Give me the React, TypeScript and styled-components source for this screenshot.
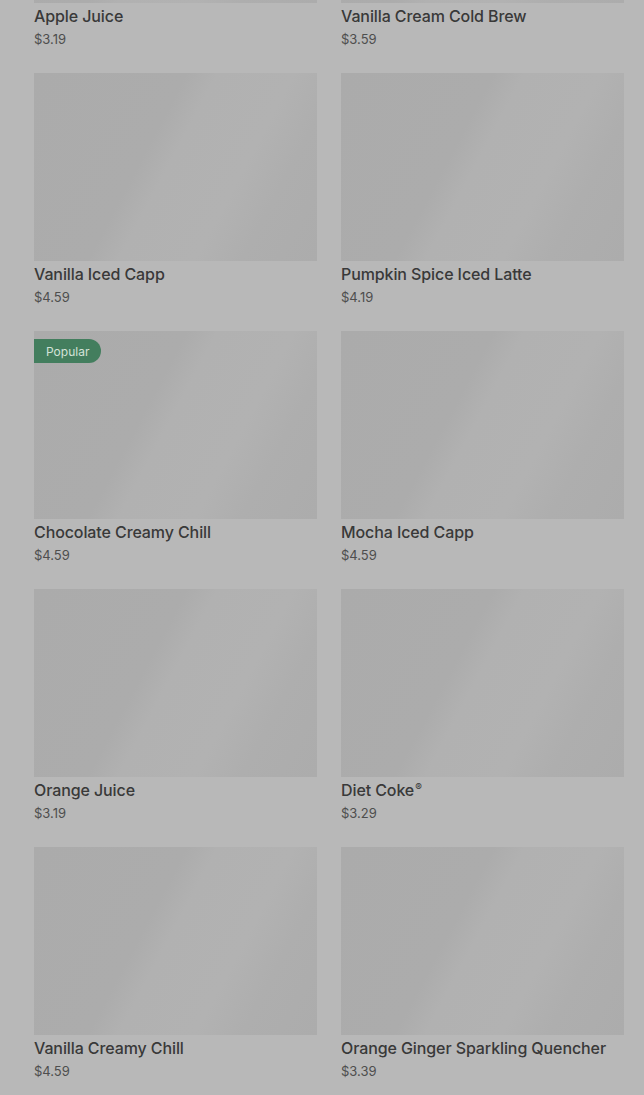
import React from "react";
import styled, { createGlobalStyle } from "styled-components";

const Global = createGlobalStyle`
  html, body { margin: 0; padding: 0; background: #b8b8b8; overflow: hidden; }
  body { font-family: Inter, Roboto, "Liberation Sans", Arial, sans-serif; }
`;

const Grid = styled.div`
  display: grid;
  grid-template-columns: 283px 283px;
  column-gap: 24px;
  row-gap: 24px;
  padding: 0 20px 0 34px;
  margin-top: -185px;
`;

const Card = styled.div`
  display: flex;
  flex-direction: column;
`;

const Thumb = styled.div`
  position: relative;
  height: 188px;
  background: linear-gradient(
    118deg,
    #ababab 0%,
    #acacac 40%,
    #b1b1b1 48%,
    #b2b2b2 68%,
    #aeaeae 80%,
    #acacac 100%
  );
`;

const Badge = styled.span`
  position: absolute;
  top: 8px;
  left: 0;
  height: 24px;
  padding: 0 12px;
  display: flex;
  align-items: center;
  background: #437e5e;
  color: #d3e2d8;
  font-size: 12px;
  border-radius: 0 12px 12px 0;
`;

const Title = styled.div`
  margin-top: 1px;
  height: 24px;
  font-size: 16px;
  font-weight: 500;
  line-height: 24px;
  letter-spacing: -0.1px;
  color: #393939;
  white-space: nowrap;
`;

const Mark = styled.span`
  font-size: 10px;
  line-height: 0;
  vertical-align: 5px;
  margin-left: 1px;
`;

const Price = styled.div`
  margin-top: 1px;
  font-size: 13px;
  line-height: 20px;
  color: #4e4e4e;
`;

const items = [
  { name: "Apple Juice", price: "$3.19" },
  { name: "Vanilla Cream Cold Brew", price: "$3.59" },
  { name: "Vanilla Iced Capp", price: "$4.59" },
  { name: "Pumpkin Spice Iced Latte", price: "$4.19" },
  { name: "Chocolate Creamy Chill", price: "$4.59", popular: true },
  { name: "Mocha Iced Capp", price: "$4.59" },
  { name: "Orange Juice", price: "$3.19" },
  { name: "Diet Coke", price: "$3.29", mark: "®" },
  { name: "Vanilla Creamy Chill", price: "$4.59" },
  { name: "Orange Ginger Sparkling Quencher", price: "$3.39" },
];

export default function App() {
  return (
    <>
      <Global />
      <Grid>
        {items.map((it) => (
          <Card key={it.name}>
            <Thumb>{it.popular && <Badge>Popular</Badge>}</Thumb>
            <Title>
              {it.name}
              {it.mark && <Mark>{it.mark}</Mark>}
            </Title>
            <Price>{it.price}</Price>
          </Card>
        ))}
      </Grid>
    </>
  );
}
